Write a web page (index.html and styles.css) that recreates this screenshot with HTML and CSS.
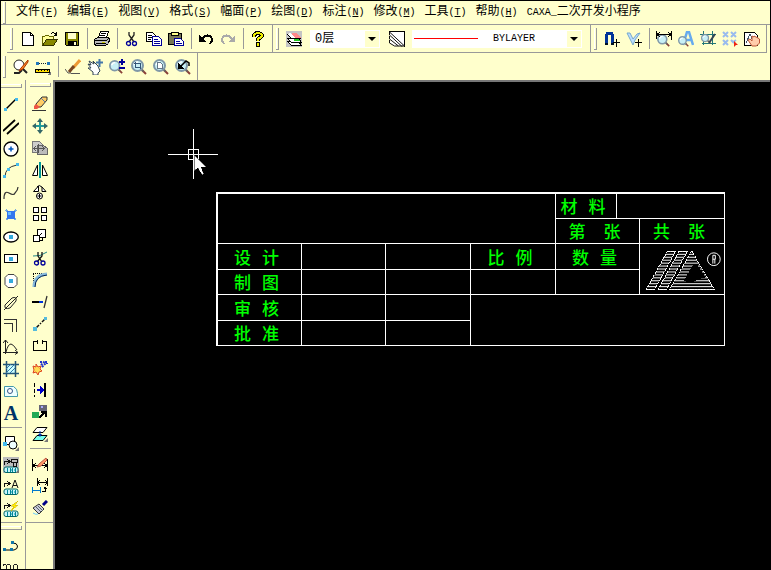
FILE: index.html
```html
<!DOCTYPE html>
<html lang="zh-CN">
<head>
<meta charset="utf-8">
<title>CAXA</title>
<link rel="stylesheet" href="styles.css">
</head>
<body>
<svg class="defs" aria-hidden="true">
  <defs>
    <symbol id="lens" viewBox="0 0 16 16">
      <g class="smooth">
      <path d="M11 11l4 4" stroke="#8a4038" stroke-width="2"/>
      <path d="M10.500 10.500l2 2" stroke="#666" stroke-width="2"/>
      <circle cx="6.500" cy="6.500" r="5.500" fill="#c8f0f6" stroke="#8098a8" stroke-width="2"/>
      <path d="M3 6q1-3 4-3" stroke="#fff" fill="none" stroke-width="1.500"/>
      </g>
    </symbol>
    <symbol id="tag" viewBox="0 0 16 16">
      <g class="smooth">
      <rect x="1" y="10" width="14" height="5.500" rx="2" fill="#c8f4fa" stroke="#066"/>
      <path d="M4.500 11v4M7.500 11v4M7.500 13h2M9.500 11v4M12.500 11v4M11 13h1" stroke="#089" fill="none"/>
      </g>
      <path d="M1.500 8V4.500H6M4 2l3 2.500L4 7" stroke="#111" fill="none"/>
    </symbol>
    <symbol id="more" viewBox="0 0 16 16"><path d="M16 12v4h-4z" fill="#777"/></symbol>
    <pattern id="hatch" width="4" height="3" patternUnits="userSpaceOnUse"><path d="M0 .5h4" stroke="#fff"/></pattern>
  </defs>
</svg>

<header class="top">
  <nav class="menu" aria-label="菜单">
    <span class="grip"></span>
    <button>文件<span class="lat">(<u>F</u>)</span></button>
    <button>编辑<span class="lat">(<u>E</u>)</span></button>
    <button>视图<span class="lat">(<u>V</u>)</span></button>
    <button>格式<span class="lat">(<u>S</u>)</span></button>
    <button>幅面<span class="lat">(<u>P</u>)</span></button>
    <button>绘图<span class="lat">(<u>D</u>)</span></button>
    <button>标注<span class="lat">(<u>N</u>)</span></button>
    <button>修改<span class="lat">(<u>M</u>)</span></button>
    <button>工具<span class="lat">(<u>T</u>)</span></button>
    <button>帮助<span class="lat">(<u>H</u>)</span></button>
    <button><span class="lat">CAXA_</span>二次开发小程序</button>
  </nav>

  <div class="bar-row inset">
    <div class="bar" role="toolbar" aria-label="标准">
      <span class="grip"></span>
      <button class="tool" aria-label="新建"><svg viewBox="0 0 16 16"><path d="M2.500 1.500h8l3 3v10h-11z" fill="#fff" stroke="#000"/><path d="M10.500 1.500v3h3" fill="none" stroke="#000"/></svg></button>
      <button class="tool" aria-label="打开"><svg viewBox="0 0 16 16"><path d="M.5 14.500v-9h2l1-1h3l1 1h4v3" fill="#ff9" stroke="#660"/><path d="M.5 14.500l4-6h11l-4 6z" fill="#880" stroke="#330"/><path d="M9 2.500q3-2 5 1M14.500 1v3h-3" fill="none" stroke="#000"/></svg></button>
      <button class="tool" aria-label="保存"><svg viewBox="0 0 16 16"><path d="M1.500 1.500h13v13h-12l-1-1z" fill="#880" stroke="#000"/><path d="M4 2h8v6H4z" fill="#ffc"/><path d="M4 10h9v5H4z" fill="#000"/><path d="M10 11h2v3h-2z" fill="#ffc"/></svg></button>
      <span class="sep"></span>
      <button class="tool" aria-label="打印"><svg viewBox="0 0 16 16"><path d="M4.500 6.500l2-6h8l-2 6" fill="#fff" stroke="#000"/><path d="M7 2.500h5M6 4.500h5" stroke="#000"/><path d="M.5 8.500l3-2h11l1 2-1 4-3 2h-10l-1-2z" fill="#bbb" stroke="#000"/><path d="M1 9.500h11l3-2M2 12.500h10" fill="none" stroke="#000"/><path d="M8 11h3" stroke="#cc0"/></svg></button>
      <span class="sep"></span>
      <button class="tool" aria-label="剪切"><svg class="smooth" viewBox="0 0 16 16"><path d="M5 1v3l5 7M10 1v3l-5 7" fill="none" stroke="#222" stroke-width="1.300"/><circle cx="4.500" cy="12.500" r="2" fill="none" stroke="#009" stroke-width="1.300"/><circle cx="10.500" cy="12.500" r="2" fill="none" stroke="#009" stroke-width="1.300"/></svg></button>
      <button class="tool" aria-label="复制"><svg viewBox="0 0 16 16"><path d="M.5 1.500h6l3 3v6h-9z" fill="#fff" stroke="#000"/><path d="M2 4.500h4M2 6.500h4M2 8.500h3" stroke="#000"/><path d="M6.500 5.500h6l3 3v6h-9z" fill="#fff" stroke="#009"/><path d="M8 8.500h4M8 10.500h6M8 12.500h6" stroke="#009"/></svg></button>
      <button class="tool" aria-label="粘贴"><svg viewBox="0 0 16 16"><path d="M.5 2.500h13v11H.5z" fill="#775" stroke="#000"/><path d="M4 1.500h6v3H3v-2z" fill="#ff8" stroke="#000"/><path d="M6.500 7.500h6l3 3v4h-9z" fill="#fff" stroke="#009"/><path d="M8 10.500h4M8 12.500h6" stroke="#009"/></svg></button>
      <span class="sep"></span>
      <button class="tool" aria-label="撤销"><svg viewBox="0 0 16 16"><path d="M1 4v7h7z" fill="#000"/><path d="M4 8q4-5 8-3 4 3 0 8" fill="none" stroke="#000" stroke-width="2"/></svg></button>
      <button class="tool" aria-label="重做"><svg viewBox="0 0 16 16"><path d="M15 4v7H8z" fill="#aaa"/><path d="M12 8Q8 3 4 5q-4 3 0 8" fill="none" stroke="#aaa" stroke-width="2"/></svg></button>
      <span class="sep"></span>
      <button class="tool" aria-label="帮助"><svg viewBox="0 0 16 16"><path d="M4 6V4q4-4 8 0 0 2-4 4v2" fill="none" stroke="#000" stroke-width="4"/><path d="M6 11h4v5H6z" fill="#000"/><path d="M4 6V4q4-4 8 0 0 2-4 4v2M8 12v3" fill="none" stroke="#ee0" stroke-width="2"/></svg></button>
    </div>

    <div class="bar props" role="toolbar" aria-label="颜色图层">
      <span class="grip"></span>
      <button class="tool" aria-label="层控制"><svg viewBox="0 0 16 16"><path d="M0 0h16v16H0z" fill="#c4c4c4"/><path d="M1 10l4 4h10l-3-4z" fill="#fff" stroke="#000"/><path d="M1 7l4 4h10l-3-4z" fill="#fff" stroke="#000"/><path d="M8 8h4l2 2H8z" fill="#2c2"/><path d="M1 3l4 4h10l-4-5z" fill="#f88"/><path d="M1 3l4 4h4L4 2z" fill="#fff"/><path d="M1 3l4 4h10" fill="none" stroke="#000"/></svg></button>
      <span class="combo layer"><select aria-label="图层"><option>0层</option></select></span>
      <button class="tool" aria-label="线型"><svg viewBox="0 0 16 16"><path d="M0 .5h15.500V16" fill="#fff" stroke="#000"/><path class="smooth" d="M.5 1v3l12 11h3zM.5 5v3l9 7h4M.5 9v3l5 3h4" fill="#fff" stroke="#111"/></svg></button>
      <span class="combo line"><select aria-label="线型颜色"><option>BYLAYER</option></select></span>
    </div>

    <div class="bar last" role="toolbar" aria-label="设置">
      <span class="grip"></span>
      <button class="tool" aria-label="捕捉"><svg viewBox="0 0 16 16"><path d="M2.500 13V5q0-3 3-3t3 3v8" fill="none" stroke="#039" stroke-width="3"/><path d="M1 12h3v2H1zM7 12h3v2H7z" fill="#012"/><path d="M12.500 8v8M9 11.500h7" stroke="#000"/></svg></button>
      <button class="tool" aria-label="过滤"><svg viewBox="0 0 16 16"><path class="smooth" d="M1 2l6 12 2-5 5-7-3 1-4 5-3-6z" fill="#bdf" stroke="#7ac"/><path d="M12.500 8v8M9 11.500h7" stroke="#000"/></svg></button>
      <span class="sep"></span>
      <button class="tool" aria-label="尺寸查询"><svg viewBox="0 0 16 16"><use href="#lens" x="1" y="3" width="13" height="13"/><path d="M.5 0v8M15.500 0v9M1 3.500h14M4 1L1 3.500 4 6M12 1l3 2.500L12 6" fill="none" stroke="#000"/></svg></button>
      <button class="tool" aria-label="文字查询"><svg class="smooth" viewBox="0 0 16 16"><path d="M5 14L9 1h2l4 13M7 9h6" fill="none" stroke="#6ae" stroke-width="2.500"/><use href="#lens" y="5" width="11" height="11"/></svg></button>
      <button class="tool" aria-label="剖面查询"><svg class="smooth" viewBox="0 0 16 16"><path d="M0 3.500h16M3.500 0v14M12.500 0v14M2 12.500h14" fill="none" stroke="#277"/><use href="#lens" x="1" y="3" width="10" height="10"/><path d="M15 3L9 12" stroke="#345" stroke-width="2"/></svg></button>
      <button class="tool" aria-label="点样式"><svg class="smooth" viewBox="0 0 16 16"><path d="M1 1l5 5M6 1L1 6M9 1l5 5M14 1L9 6M1 9l5 5M6 9l-5 5M9 9l3 3M14 9l-3 2" stroke="#9be" stroke-width="2"/><path d="M12 10v6l2-2h2z" fill="#e21"/></svg></button>
      <button class="tool" aria-label="拾取"><svg viewBox="0 0 16 16"><path d="M.5 1.500h10l3 3v10H.5z" fill="#fff" stroke="#000"/><path d="M2 12L6 3l4 9" fill="none" stroke="#456"/><path class="smooth" d="M4 9l2-1 2 2V5l2 1V5l2 1 2 1 1.500 1v4l-3 3H8z" fill="#fca" stroke="#b53"/></svg></button>
    </div>
  </div>

  <div class="bar-row">
    <div class="bar view" role="toolbar" aria-label="显示">
      <span class="grip"></span>
      <button class="tool" aria-label="重画"><svg class="smooth" viewBox="0 0 16 16"><circle cx="6" cy="6" r="5" fill="#fff" stroke="#222"/><path d="M9 9l5 5M1 14h5l3-3" stroke="#222" stroke-width="2" fill="none"/><path d="M15 1L8 9l-2 3 4-2 5-7z" fill="#f82" stroke="#a30"/></svg></button>
      <button class="tool" aria-label="线宽"><svg viewBox="0 0 16 16"><path d="M1 3h3v3H1zM12 3h3v3h-3z" fill="#27b"/><path d="M4 4.500h8" stroke="#123" stroke-dasharray="1 1"/><path d="M.5 10.500h14v3H.5z" fill="#fd0" stroke="#000"/><path d="M3.500 10v2M6.500 10v2M9.500 10v2M12.500 10v2" stroke="#000"/><use href="#more"/></svg></button>
      <span class="sep"></span>
      <button class="tool" aria-label="画笔"><svg class="smooth" viewBox="0 0 16 16"><path d="M15 1L8 9" stroke="#e93" stroke-width="3"/><path d="M9 7l-5 6" stroke="#742" stroke-width="3"/><path d="M0 10l3 4h3M6 14.500h9" fill="none" stroke="#555"/></svg></button>
      <button class="tool" aria-label="平移"><svg class="smooth" viewBox="0 0 16 16"><path d="M1 5l3 1-2-4 5 3-1-3 5 5 2 5-2 2v2H6v-3L1 9h3z" fill="#fff" stroke="#345"/><path d="M12.500 0v8M9 3.500h7" stroke="#47a" stroke-width="2"/></svg></button>
      <button class="tool" aria-label="缩放"><svg viewBox="0 0 16 16"><use href="#lens" width="14" height="16"/><path d="M10 3h6M13 0v6M10 9h6" stroke="#009" stroke-width="2"/></svg></button>
      <button class="tool" aria-label="窗口放大"><svg viewBox="0 0 16 16"><use href="#lens"/><path d="M3 4.500h6.500V10M4.500 3v5.500H10" fill="none" stroke="#357"/></svg></button>
      <button class="tool" aria-label="全部显示"><svg viewBox="0 0 16 16"><use href="#lens"/><path d="M4.500 3.500h3l2 2v4h-5z" fill="#fff" stroke="#678"/></svg></button>
      <button class="tool" aria-label="显示上一步"><svg viewBox="0 0 16 16"><use href="#lens"/><path d="M3 4v6h6z" fill="#000"/><path class="smooth" d="M6 7l5-5 3 2v3" fill="none" stroke="#000" stroke-width="1.500"/></svg></button>
    </div>
  </div>
</header>

<main class="work">
  <aside class="side">
    <div class="palette" role="toolbar" aria-label="绘图工具">
      <span class="grip-h"></span>
      <button class="tool" aria-label="直线"><svg class="smooth" viewBox="0 0 16 16"><path d="M2 13L13 2" stroke="#000" stroke-width="1.500"/><path d="M1 11h3v3H1zM12 1h3v3h-3z" fill="#4be"/></svg></button>
      <button class="tool" aria-label="平行线"><svg class="smooth" viewBox="0 0 16 16"><path d="M0 12L12 1M4 15L16 4" stroke="#000" stroke-width="1.800"/></svg></button>
      <button class="tool" aria-label="圆"><svg class="smooth" viewBox="0 0 16 16"><circle cx="8" cy="8" r="7" fill="#fff" stroke="#000" stroke-width="1.300"/><path d="M8 5.500v5M5.500 8h5" stroke="#05b" stroke-width="1.500"/></svg></button>
      <button class="tool" aria-label="圆弧"><svg class="smooth" viewBox="0 0 16 16"><path d="M2 14Q2 4 14 2" fill="none" stroke="#333"/><path d="M0 12h3v3H0zM4 5h3v3H4zM13 0h3v3h-3z" fill="#4be"/></svg></button>
      <button class="tool" aria-label="样条"><svg class="smooth" viewBox="0 0 16 16"><path d="M1 14q0-9 5-6t6 0q3-3 3-6" fill="none" stroke="#333" stroke-width="1.200"/></svg></button>
      <button class="tool" aria-label="点"><svg viewBox="0 0 16 16"><path d="M3 3l10 10M13 3L3 13" stroke="#7ad" stroke-width="2"/><path d="M4 4h8v8H4z" fill="#37e"/><path d="M5 5h3v3H5z" fill="#6bf"/></svg></button>
      <button class="tool" aria-label="椭圆"><svg class="smooth" viewBox="0 0 16 16"><ellipse cx="8" cy="8" rx="7.300" ry="5" fill="#fff" stroke="#000" stroke-width="1.300"/><path d="M6 6h4v4H6z" fill="#3ad"/></svg></button>
      <button class="tool" aria-label="矩形"><svg viewBox="0 0 16 16"><path d="M1.500 3.500h13v8h-13z" fill="#fff" stroke="#000"/><path d="M6 6h4v4H6z" fill="#3ad"/></svg></button>
      <button class="tool" aria-label="正多边形"><svg class="smooth" viewBox="0 0 16 16"><path d="M5 1.500h6l3 3v7l-3 3H5l-3-3v-7z" fill="#fff" stroke="#444"/><path d="M6 6h4v4H6z" fill="#3ad"/></svg></button>
      <button class="tool" aria-label="中心线"><svg class="smooth" viewBox="0 0 16 16"><path d="M2 10l7-7q5-2 4 3l-6 7q-6 2-5-3zM1 15L15 1" fill="none" stroke="#222"/></svg></button>
      <button class="tool" aria-label="轮廓线"><svg viewBox="0 0 16 16"><path d="M1 2.500h12.500V15M1 6.500h8.500V15" fill="none" stroke="#333"/></svg></button>
      <button class="tool" aria-label="公式曲线"><svg class="smooth" viewBox="0 0 16 16"><path d="M2.500 15V1M0 13.500h15M0 4l2.500-3L5 4M12 11l3 2.500-3 2M3 13q2-8 5-8 2 0 6 6" fill="none" stroke="#222"/></svg></button>
      <button class="tool" aria-label="剖面线"><svg class="smooth" viewBox="0 0 16 16"><path d="M3.500 3.500h9v9h-9z" fill="#cff"/><path d="M0 3.500h16M0 12.500h16M3.500 0v16M12.500 0v16" stroke="#257" stroke-width="1.500"/><path d="M3 8l5-5M3 12l9-9M7 12l5-5" stroke="#37a"/></svg></button>
      <button class="tool" aria-label="填充"><svg class="smooth" viewBox="0 0 16 16"><path d="M1.500 13.500v-10h9q4 2 4 7v3z" fill="#eff" stroke="#49a"/><circle cx="7" cy="8" r="2.500" fill="#fff" stroke="#358"/></svg></button>
      <button class="tool letter" aria-label="文字">A</button>
      <span class="rule"></span>
      <button class="tool" aria-label="块生成"><svg class="smooth" viewBox="0 0 16 16"><path d="M2.500 1.500h9v8h-9z" fill="#fff" stroke="#000"/><circle cx="10" cy="10" r="4" fill="#eff" stroke="#000"/><path d="M0 7h4v4H0z" fill="#4be"/><use href="#more"/></svg></button>
      <button class="tool on" aria-label="尺寸标注"><svg viewBox="0 0 16 16"><use href="#tag"/><path d="M8.500 2.500h6v3h-6zM10.500 6v3h3V6" fill="none" stroke="#111"/><use href="#more"/></svg></button>
      <button class="tool" aria-label="文字标注"><svg viewBox="0 0 16 16"><use href="#tag"/><path class="smooth" d="M9 9l3-8 3 8M10 6.500h4" fill="none" stroke="#111"/></svg></button>
      <button class="tool" aria-label="快速标注"><svg viewBox="0 0 16 16"><use href="#tag"/><path d="M15 0L8 5h3L8 10l7-6h-3z" fill="#fe0" stroke="#ca0" stroke-width=".5"/></svg></button>
      <span class="end"></span>
      <span class="grip-h"></span>
      <button class="tool" aria-label="轨迹"><svg class="smooth" viewBox="0 0 16 16"><path d="M1 11h10q4-1 3.500-4T10 4" fill="none" stroke="#000"/><path d="M0 9h3v3H0zM7 9h3v3H7zM8 2h3v3H8z" fill="#17a"/></svg></button>
      <button class="tool" aria-label="折弯"><svg viewBox="0 0 16 16"><path d="M3.500 11V5Q1 1 .5 5M3.500 5q2-4 4 0v6M10.500 11V5q2-4 4 0v6" fill="none" stroke="#222"/></svg></button>
    </div>

    <div class="palette edit" role="toolbar" aria-label="编辑工具">
      <span class="grip-h"></span>
      <button class="tool" aria-label="删除"><svg class="smooth" viewBox="0 0 16 16"><path d="M10 1h5v3L9 11H4V8z" fill="#fc6" stroke="#333"/><path d="M4 8l4 3-3 2H2v-3z" fill="#e54"/><path d="M9 2l4 4" stroke="#57a"/><path d="M0 14.500h14" stroke="#333"/></svg></button>
      <button class="tool" aria-label="平移"><svg class="smooth" viewBox="0 0 16 16"><path d="M8 2v12M2 8h12" stroke="#299" stroke-width="2"/><path d="M8 0l3 4H5zM8 16l3-4H5zM0 8l4-3v6zM16 8l-4-3v6z" fill="#366"/></svg></button>
      <button class="tool" aria-label="平移复制"><svg viewBox="0 0 16 16"><path d="M.5 1.500h7l3 3v8H.5z" fill="#ccc" stroke="#777"/><path d="M5.500 5.500h6l4 3v6h-10z" fill="#bbb" stroke="#666"/><path d="M6.500 4v9M2 8.500h10M4 6L2 8.500 4 11M10 6l2 2.500-2 2.500" fill="none" stroke="#555"/></svg></button>
      <button class="tool" aria-label="镜像"><svg class="smooth" viewBox="0 0 16 16"><path d="M5.500 3v10.500h-5zM10.500 3v10.500h5z" fill="#fff" stroke="#000"/><path d="M8 0v16" stroke="#099" stroke-width="2"/></svg></button>
      <button class="tool" aria-label="旋转"><svg class="smooth" viewBox="0 0 16 16"><path d="M6.500 2v5.500h-5zM10 3l4 4.500h-4zM5 3q2-3 5 0" fill="#fff" stroke="#000"/><circle cx="7.500" cy="12" r="3" fill="#fff" stroke="#000"/><path d="M7.500 10v4M5.500 12h4" stroke="#000"/></svg></button>
      <button class="tool" aria-label="阵列"><svg viewBox="0 0 16 16"><path d="M1.500 1.500h5v5h-5zM9.500 1.500h5v5h-5zM1.500 9.500h5v5h-5zM9.500 9.500h5v5h-5z" fill="#fff" stroke="#000"/></svg></button>
      <button class="tool" aria-label="比例缩放"><svg viewBox="0 0 16 16"><path d="M5.500 1.500h8v8h-8z" fill="#fff" stroke="#000"/><path d="M1.500 7.500h6v6h-6z" fill="#fff" stroke="#000"/><path d="M7 8l3-3M10 10v2H8" fill="none" stroke="#000"/></svg></button>
      <button class="tool" aria-label="裁剪"><svg class="smooth" viewBox="0 0 16 16"><path d="M1 6q7 1 14-4" fill="none" stroke="#288"/><path d="M6 2v4l4 6M10 2v4l-5 6" fill="none" stroke="#111" stroke-width="1.300"/><circle cx="4.500" cy="13" r="2" fill="none" stroke="#009" stroke-width="1.300"/><circle cx="11" cy="13" r="2" fill="none" stroke="#009" stroke-width="1.300"/></svg></button>
      <button class="tool" aria-label="过渡"><svg viewBox="0 0 16 16"><path d="M1.500 15V1M1 1.500h14" stroke="#000" stroke-dasharray="1 1"/><path class="smooth" d="M2 15Q2 3 15 2" fill="none" stroke="#8bd" stroke-width="3"/><path class="smooth" d="M3 15Q3 4 15 3" fill="none" stroke="#025"/></svg></button>
      <button class="tool" aria-label="延伸"><svg class="smooth" viewBox="0 0 16 16"><path d="M0 8h9" stroke="#000" stroke-width="2"/><path d="M7 7h4v2H7z" fill="#03d"/><path d="M15 2l-3 12" stroke="#333" stroke-width="1.300"/></svg></button>
      <button class="tool" aria-label="打断"><svg class="smooth" viewBox="0 0 16 16"><path d="M3 13l4-4M8 8l1-1M10 6l4-4" stroke="#111" stroke-width="1.500"/><path d="M1 11h4v4H1zM12 1h3v3h-3z" fill="#5bd"/></svg></button>
      <button class="tool" aria-label="局部放大"><svg viewBox="0 0 16 16"><path d="M5.500 3.500h-4v9h13v-9h-4M5.500 2v4M10.500 2v4" fill="none" stroke="#000"/></svg></button>
      <button class="tool" aria-label="打散"><svg class="smooth" viewBox="0 0 16 16"><path d="M1 6l3 1V4l2 3 3-1-1 3 2 2-3 1-1 3-2-3-3 1 1-3z" fill="#fd5" stroke="#d42"/><path d="M9 5l4-4M10 7l4-4M13 2h2v2M8 2h3" stroke="#23c" stroke-width="2" stroke-dasharray="2 1"/></svg></button>
      <button class="tool" aria-label="拉伸"><svg viewBox="0 0 16 16"><path d="M2.500 1v14" stroke="#000" stroke-dasharray="4 2"/><path d="M13 1v14" stroke="#000" stroke-width="2"/><path d="M5 8h4" stroke="#00c" stroke-width="2"/><path d="M8 4l4 4-4 4z" fill="#00c"/></svg></button>
      <button class="tool" aria-label="改变属性"><svg viewBox="0 0 16 16"><path d="M7 1h8v6H7z" fill="#667"/><path d="M9 2h2v2H9z" fill="#aaf"/><path d="M0 8h7v6H0z" fill="#2a5"/><path d="M7 14l6-6M9 8h5v5" fill="none" stroke="#000" stroke-width="2"/></svg></button>
      <button class="tool" aria-label="改变层"><svg class="smooth" viewBox="0 0 16 16"><path d="M1 6.500l4-5h10l-4 5z" fill="#fff" stroke="#000"/><path d="M1 14.500l4-5h10l-4 5z" fill="#7fe" stroke="#000"/><path d="M8 5v4" stroke="#03a"/><path d="M6 8h4l-2 3z" fill="#03a"/><use href="#more"/></svg></button>
      <span class="rule"></span>
      <button class="tool" aria-label="标注编辑"><svg viewBox="0 0 16 16"><path d="M.5 3v12M15.500 3v12M1 9.500h14M4 7L1 9.500 4 12M12 7l3 2.500-3 2.500" fill="none" stroke="#000"/><path class="smooth" d="M14 2L7 8l-2 3 4-1 6-6z" fill="#f96" stroke="#b54"/></svg></button>
      <button class="tool" aria-label="尺寸驱动"><svg viewBox="0 0 16 16"><path d="M5.500 0v8M15.500 0v8M6 4.500h9M8 2L6 4.500 8 7M13 2l2 2.500L13 7" fill="none" stroke="#000"/><path d="M.5 9v6M8.500 9v6M1 12.500h7" stroke="#07c"/><path d="M10 13h3V9M12 11l1-2 2 2" fill="none" stroke="#000"/></svg></button>
      <button class="tool" aria-label="格式刷"><svg class="smooth" viewBox="0 0 16 16"><path d="M15 1l-4 4" stroke="#008" stroke-width="3"/><path d="M7 4l5 5-5 5-6-6z" fill="#ccd" stroke="#333"/><path d="M6 6l5 5M4 7l5 5" stroke="#566"/><path d="M1 13q3 2 5 1" fill="none" stroke="#6cf"/></svg></button>
    </div>
  </aside>

  <section class="canvas" aria-label="绘图区">
    <table class="title-block">
      <colgroup><col class="c84"><col class="c84"><col class="c85"><col class="c85"><col class="c61"><col class="c23"><col class="c85"></colgroup>
      <tr class="short"><td colspan="4" rowspan="2"></td><td class="tight"><span class="pair"><span>材</span><span>料</span></span></td><td colspan="2"></td></tr>
      <tr class="short"><td colspan="2"><span class="pair wide"><span>第</span><span>张</span></span></td><td><span class="pair wide"><span>共</span><span>张</span></span></td></tr>
      <tr class="tall"><td><span class="pair"><span>设</span><span>计</span></span></td><td></td><td></td><td><span class="pair"><span>比</span><span>例</span></span></td><td colspan="2"><span class="pair"><span>数</span><span>量</span></span></td>
        <td rowspan="2"><svg class="logo" viewBox="0 0 84 50" role="img" aria-label="CAXA">
          <path d="M27 6.500h8.500L14 45.500H5.500zM39 6.500h8.500L26 45.500h-8.500z" fill="url(#hatch)" stroke="#fff" stroke-dasharray="3 1"/>
          <path d="M52 6l23 39.500H29z" fill="url(#hatch)" stroke="#fff" stroke-dasharray="2 1"/>
          <path d="M54 19l4 2 8 12-7 2-9 4-6-3z" fill="#000"/>
          <g class="smooth">
            <circle cx="74.500" cy="14.500" r="6.500" fill="none" stroke="#fff"/>
            <path d="M73.500 19v-8.500h2.500v4h-2.500M75.500 14.500V19" fill="none" stroke="#fff"/>
          </g>
        </svg></td></tr>
      <tr class="short"><td><span class="pair"><span>制</span><span>图</span></span></td><td></td><td></td><td></td><td colspan="2"></td></tr>
      <tr class="tall"><td><span class="pair"><span>审</span><span>核</span></span></td><td></td><td></td><td colspan="4" rowspan="2"></td></tr>
      <tr class="short"><td><span class="pair"><span>批</span><span>准</span></span></td><td></td><td></td></tr>
    </table>
    <svg class="cross" viewBox="0 0 50 50" aria-hidden="true">
      <path d="M0 25.500h50M25.500 0v50M20.500 20.500h10v10h-10z" fill="none" stroke="#fff"/>
      <path d="M26 26v16l4-3 4 7 2-1-3-7h5z" fill="#fff" stroke="#000" stroke-width=".5"/>
    </svg>
  </section>
</main>
</body>
</html>
```
FILE: styles.css
```css
* { box-sizing: border-box; }

:root {
  --cream: #ffffcc;
  --shade: #999;
}

body {
  margin: 0;
  height: 100vh;
  overflow: hidden;
  display: flex;
  flex-direction: column;
  border: 1px solid #000;
  background: var(--cream);
  color: #000;
  font: 12px/16px "Liberation Mono", "Noto Sans CJK SC", monospace;
}

button {
  margin: 0;
  padding: 0;
  border: 0;
  background: none;
  color: inherit;
  font: inherit;
  white-space: nowrap;
}

svg { display: block; shape-rendering: crispEdges; }
.smooth { shape-rendering: auto; }
.defs { position: absolute; width: 0; height: 0; }

.lat { font-size: 10px; }

.grip {
  flex: none;
  width: 3px;
  height: 22px;
  border: solid var(--shade);
  border-width: 0 1px 1px 0;
  box-shadow: inset 1px 0 #fff;
}

.menu {
  display: flex;
  align-items: center;
  gap: 9px;
  height: 24px;
  padding: 0 2px;
  border-bottom: 1px solid var(--shade);
}
.menu .grip { margin-right: 1px; }

.bar-row { display: flex; }
.inset { padding: 0 3px 0 6px; }

.bar {
  display: flex;
  align-items: center;
  height: 28px;
  padding: 0 3px;
  border: solid var(--shade);
  border-width: 0 1px 1px 0;
}
.bar .grip { margin-right: 4px; }
.view { height: 27px; border-bottom: 0; padding: 0 3px 0 2px; }
.props { flex: 1; }

.tool {
  flex: none;
  display: flex;
  align-items: center;
  justify-content: center;
  width: 22px;
  height: 22px;
}
.tool svg { width: 16px; height: 16px; }
.on svg { background: #bbb; }

.letter {
  color: #036;
  font: bold 20px/22px "Liberation Serif", serif;
}

.sep {
  flex: none;
  width: 1px;
  height: 21px;
  margin: 0 3px 0 4px;
  background: var(--shade);
}

.combo {
  position: relative;
  display: flex;
  align-items: center;
  height: 18px;
  background: #fff;
}
.combo::after {
  content: "";
  position: absolute;
  right: 4px;
  top: 7px;
  border: solid transparent;
  border-width: 4px 4px 0;
  border-top-color: #000;
  pointer-events: none;
}
.combo select {
  appearance: none;
  width: 100%;
  height: 18px;
  margin: 0;
  padding: 0 16px 0 4px;
  border: 1px solid #fff;
  border-radius: 0;
  background: linear-gradient(var(--cream), var(--cream)) right / 14px 16px no-repeat;
  color: #000;
  font: inherit;
}
.layer { width: 70px; margin: 0 6px 0 5px; }
.line { flex: 1; margin: 0 5px 0 4px; }
.line::before {
  content: "";
  position: absolute;
  left: 2px;
  top: 8px;
  width: 64px;
  height: 1px;
  background: #f00;
}
.line select { padding-left: 80px; font-size: 10px; }

.work { flex: 1; display: flex; min-height: 0; }

.side { display: flex; align-items: flex-start; overflow: hidden; }

.palette {
  display: flex;
  flex-direction: column;
  align-items: center;
  width: 25px;
  padding: 4px 3px 0 0;
  border-right: 1px solid var(--shade);
}
.palette .tool { margin-right: 1px; }
.edit {
  width: 27px;
  padding: 3px 2px 3px 3px;
  border-right: 0;
  border-bottom: 1px solid var(--shade);
}

.grip-h {
  flex: none;
  width: 21px;
  height: 4px;
  margin-bottom: 6px;
  border: solid var(--shade);
  border-width: 0 1px 1px 0;
  box-shadow: inset 0 1px #fff;
}

.rule {
  flex: none;
  width: 21px;
  height: 1px;
  margin: 3px 0 4px;
  background: var(--shade);
}

.end {
  flex: none;
  align-self: stretch;
  height: 1px;
  margin: 2px 0 3px;
  background: var(--shade);
}

.canvas {
  position: relative;
  flex: 1;
  border: solid #777;
  border-width: 2px 0 0 2px;
  background: #000;
}

.title-block {
  position: absolute;
  left: 161px;
  top: 110px;
  table-layout: fixed;
  width: 509px;
  border-collapse: separate;
  border-spacing: 0;
  border: solid #fff;
  border-width: 2px 0 0 2px;
  color: #0f0;
  font: 500 17px/20px "Noto Sans CJK SC", sans-serif;
}
.title-block td {
  padding: 0;
  border: solid #fff;
  border-width: 0 1px 1px 0;
}
.c84 { width: 84px; }
.c85 { width: 85px; }
.c61 { width: 61px; }
.c23 { width: 23px; }
.short { height: 25px; }
.tall { height: 26px; }

.pair { display: flex; justify-content: center; gap: 11px; margin-right: 6px; }
.wide { gap: 18px; }
.logo { width: 84px; height: 49px; }

.cross {
  position: absolute;
  left: 113px;
  top: 47px;
  width: 50px;
  height: 50px;
}
```
